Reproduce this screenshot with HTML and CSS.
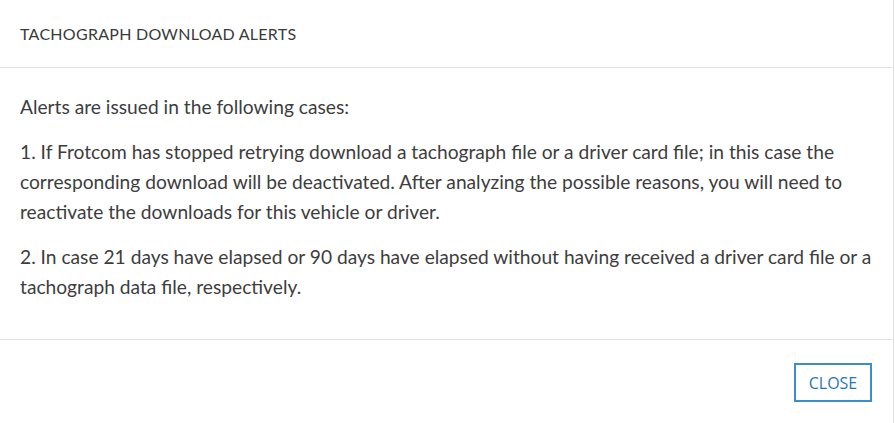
FILE: index.html
```html
<!DOCTYPE html>
<html lang="en">
<head>
    <meta charset="UTF-8">
    <meta name="viewport" content="width=device-width, initial-scale=1.0">
    <title>Tachograph Download Alerts</title>
    <link rel="stylesheet" href="styles.css">
</head>
<body>
    <div class="modal">
        <div class="modal-header">
            <h4 class="modal-title">TACHOGRAPH DOWNLOAD ALERTS</h4>
        </div>
        <div class="modal-body">
            <p>Alerts are issued in the following cases:</p>
            <p>1. If Frotcom has stopped retrying download a tachograph file or a driver card file; in this case the corresponding download will be deactivated. After analyzing the possible reasons, you will need to reactivate the downloads for this vehicle or driver.</p>
            <p>2. In case 21 days have elapsed or 90 days have elapsed without having received a driver card file or a tachograph data file, respectively.</p>
        </div>
        <div class="modal-footer">
            <button type="button" class="btn-close">CLOSE</button>
        </div>
    </div>
</body>
</html>
```

FILE: styles.css
```css
body {
    margin: 0;
    padding: 0;
    background-color: #fff;
    font-family: Lato, "Open Sans", sans-serif;
    color: #333;
}
.modal {
    width: 893px;
    height: 423px;
    border-right: 1px solid #e2e2e2;
    background: #fff;
}
.modal-header {
    height: 67px;
    display: flex;
    align-items: center;
    padding: 0 20px;
    border-bottom: 1px solid #e5e5e5;
}
.modal-title {
    margin: 0;
    font-size: 16px;
    font-weight: 400;
    letter-spacing: 0.27px;
    color: #3a3a3a;
}
.modal-body {
    padding: 24px 20px 22px;
}
.modal-body p {
    margin: 0 0 15px;
    font-size: 19.2px;
    line-height: 30px;
    color: #3d3d3d;
}
.modal-footer {
    display: flex;
    justify-content: flex-end;
    padding: 23px 21px 21px;
    border-top: 1px solid #e5e5e5;
}
.btn-close {
    width: 78px;
    height: 39px;
    padding: 0;
    background: #fff;
    border: 2px solid #3b8dcc;
    border-radius: 0;
    font-family: "Open Sans", sans-serif;
    font-size: 16px;
    color: #2677b6;
    cursor: pointer;
}
```
